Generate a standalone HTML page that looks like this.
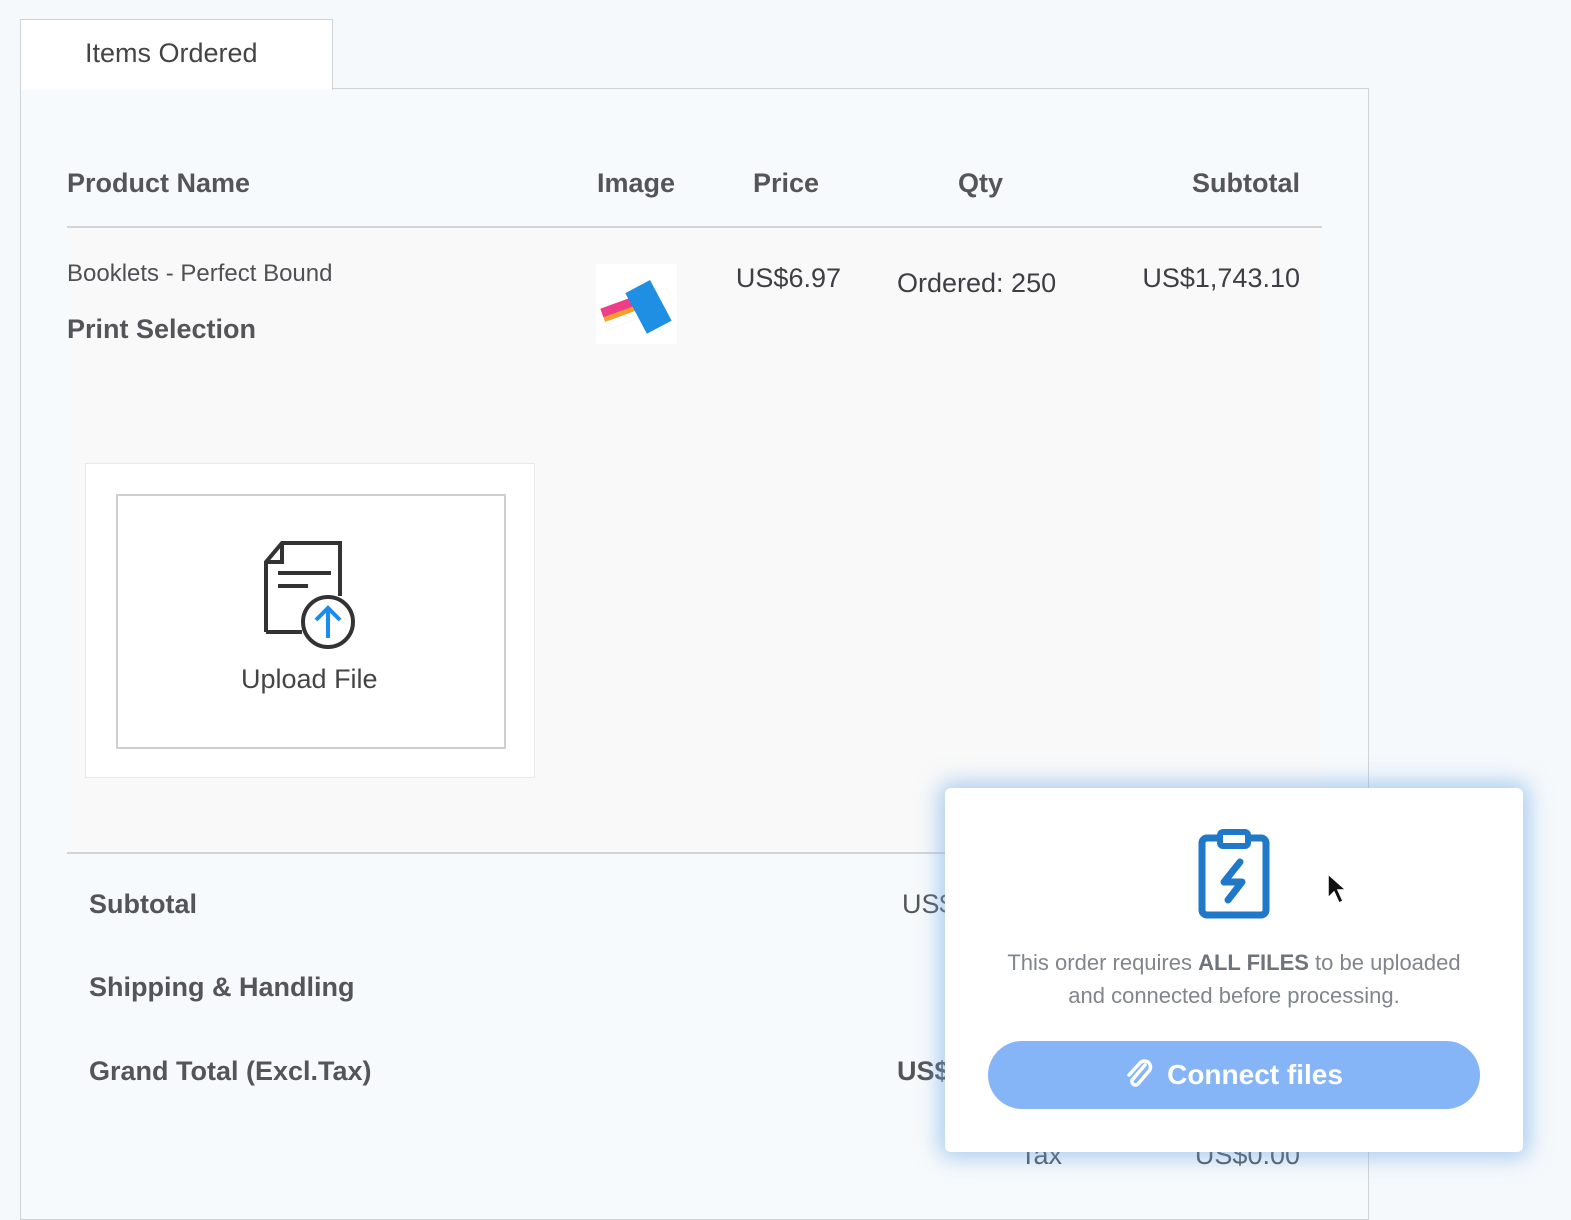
<!DOCTYPE html>
<html><head><style>
body{margin:0;width:1571px;height:1200px;background:#f6f9fc;font-family:"Liberation Sans",sans-serif;color:#4a4a4f;position:relative;overflow:hidden}
.a{position:absolute;white-space:nowrap}
.h{font-weight:bold;font-size:26px;color:#545459}
.r{text-align:right}
</style></head><body>
<div class="a" style="left:20px;top:88px;width:1347px;height:1130px;border:1px solid #cfd3d6;background:#f7fafc"></div>
<div class="a" style="left:20px;top:19px;width:311px;height:70px;border:1px solid #cfd3d6;border-bottom:none;background:#fff"></div>
<div class="a" style="left:85px;top:38px;font-size:27px;color:#444">Items Ordered</div>
<div class="a h" style="left:67px;top:168px;font-size:27px">Product Name</div>
<div class="a h" style="left:597px;top:168px;font-size:27px">Image</div>
<div class="a h" style="left:753px;top:168px;font-size:27px">Price</div>
<div class="a h" style="left:958px;top:168px;font-size:27px">Qty</div>
<div class="a h r" style="left:1100px;width:200px;top:168px;font-size:27px">Subtotal</div>
<div class="a" style="left:67px;top:226px;width:1255px;height:624px;background:#f9f9f9;border-top:2px solid #d3d6d8;border-bottom:2px solid #d3d6d8"></div>
<div class="a" style="left:67px;top:260px;font-size:24px;color:#505055">Booklets - Perfect Bound</div>
<div class="a h" style="left:67px;top:314px;font-size:27px">Print Selection</div>
<div class="a" style="left:596px;top:264px;width:81px;height:80px;background:#fff">
<svg width="81" height="80"><g transform="rotate(-20 30 45)"><rect x="6" y="36" width="34" height="22" fill="#f6a02a"/><rect x="6" y="36" width="34" height="9" fill="#ee3d8a"/><rect x="6" y="50" width="34" height="8" fill="#fff"/></g><g transform="rotate(-28 52 42)"><rect x="38" y="20" width="28" height="46" fill="#1f8fe3"/></g></svg></div>
<div class="a r" style="left:700px;width:141px;top:263px;font-size:27px;color:#3e3e44">US$6.97</div>
<div class="a" style="left:897px;top:268px;font-size:27px;color:#3e3e44">Ordered: 250</div>
<div class="a r" style="left:1100px;width:200px;top:263px;font-size:27px;color:#3e3e44">US$1,743.10</div>
<div class="a" style="left:85px;top:463px;width:448px;height:313px;background:#fff;border:1px solid #e8e8e8"></div>
<div class="a" style="left:116px;top:494px;width:386px;height:251px;border:2px solid #cfcfcf;background:#fff"></div>
<svg class="a" style="left:258px;top:538px" width="100" height="115"><path d="M8 94V24L24 5H82V58M8 24H24V5M20 35H73M20 48H50M8 94H44" fill="none" stroke="#333" stroke-width="4"/><circle cx="70" cy="84" r="25" fill="#fff" stroke="#333" stroke-width="4"/><path d="M70 100V70M58 82L70 70L82 82" fill="none" stroke="#1a8cf0" stroke-width="4"/></svg>
<div class="a" style="left:241px;top:664px;font-size:27px;color:#444">Upload File</div>
<div class="a h" style="left:89px;top:889px;font-size:27px">Subtotal</div>
<div class="a h" style="left:89px;top:972px;font-size:27px">Shipping &amp; Handling</div>
<div class="a h" style="left:89px;top:1056px;font-size:27px">Grand Total (Excl.Tax)</div>
<div class="a" style="left:902px;top:889px;font-size:27px;color:#555">US$</div>
<div class="a" style="left:897px;top:1056px;font-size:27px;font-weight:bold;color:#555">US$</div>
<div class="a" style="left:1020px;top:1140px;font-size:27px;color:#555">Tax</div>
<div class="a r" style="left:1100px;width:200px;top:1140px;font-size:27px;color:#555">US$0.00</div>
<div class="a" style="left:945px;top:788px;width:578px;height:364px;background:#fff;border-radius:6px;box-shadow:0 0 22px 6px rgba(110,170,230,.55)"></div>
<svg class="a" style="left:1196px;top:828px" width="80" height="94"><rect x="6" y="10" width="64" height="77" rx="5" fill="none" stroke="#1f78c8" stroke-width="7"/><rect x="24" y="4" width="28" height="14" rx="3" fill="#fff" stroke="#1f78c8" stroke-width="6"/><path d="M44 34L28 54H46L32 72" fill="none" stroke="#1f78c8" stroke-width="7" stroke-linecap="round" stroke-linejoin="round"/></svg>
<svg class="a" style="left:1326px;top:872px" width="22" height="34"><path d="M2 2V26L8 20L13 31L17 29L12 18H20Z" fill="#111" stroke="#fff" stroke-width="1.5"/></svg>
<div class="a" style="left:945px;top:946px;width:578px;text-align:center;font-size:22px;line-height:33px;color:#80868c">This order requires <b style="color:#6e747a">ALL FILES</b> to be uploaded<br>and connected before processing.</div>
<div class="a" style="left:988px;top:1041px;width:492px;height:68px;border-radius:34px;background:#85b5f7;color:#fff;font-weight:bold;font-size:28px;text-align:center;line-height:68px"><svg width="28" height="30" style="vertical-align:-5px;margin-right:14px"><path d="M20 6L8 20a3.5 3.5 0 0 0 5 5L24 12a6 6 0 0 0-9-8L4 16" fill="none" stroke="#fff" stroke-width="3.5" stroke-linecap="round"/></svg>Connect files</div>
</body></html>
